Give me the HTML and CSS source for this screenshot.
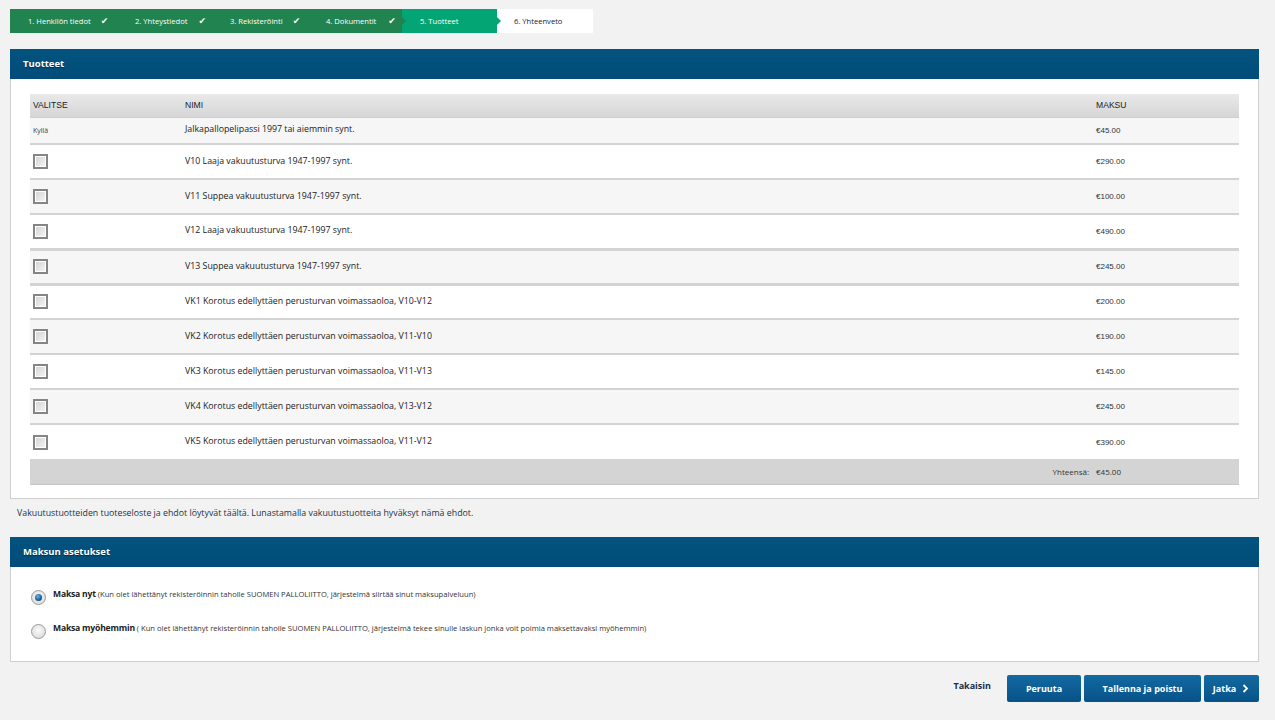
FILE: index.html
```html
<!DOCTYPE html>
<html lang="fi">
<head>
<meta charset="utf-8">
<title>Tuotteet</title>
<link rel="stylesheet" href="styles.css">
</head>
<body>
<div class="page">
  <nav class="steps">
    <div class="step done s1"><span>1. Henkilön tiedot</span><span class="chk">✔</span></div>
    <div class="step done s2"><span>2. Yhteystiedot</span><span class="chk">✔</span></div>
    <div class="step done s3"><span>3. Rekisteröinti</span><span class="chk">✔</span></div>
    <div class="step done s4 arrow"><span>4. Dokumentit</span><span class="chk">✔</span></div>
    <div class="step current s5 arrow"><span>5. Tuotteet</span></div>
    <div class="step todo s6"><span>6. Yhteenveto</span></div>
  </nav>

  <section class="panel">
    <h2 class="panel-head">Tuotteet</h2>
    <div class="panel-body products">
      <table class="ptable">
        <thead>
          <tr><th class="c1">VALITSE</th><th class="c2">NIMI</th><th class="c3">MAKSU</th></tr>
        </thead>
        <tbody>
          <tr class="alt first"><td class="c1 yes">Kyllä</td><td class="c2">Jalkapallopelipassi 1997 tai aiemmin synt.</td><td class="c3">€45.00</td></tr>
          <tr><td class="c1"><span class="cb"></span></td><td class="c2">V10 Laaja vakuutusturva 1947-1997 synt.</td><td class="c3">€290.00</td></tr>
          <tr class="alt"><td class="c1"><span class="cb"></span></td><td class="c2">V11 Suppea vakuutusturva 1947-1997 synt.</td><td class="c3">€100.00</td></tr>
          <tr class="thick"><td class="c1"><span class="cb"></span></td><td class="c2">V12 Laaja vakuutusturva 1947-1997 synt.</td><td class="c3">€490.00</td></tr>
          <tr class="alt thick"><td class="c1"><span class="cb"></span></td><td class="c2">V13 Suppea vakuutusturva 1947-1997 synt.</td><td class="c3">€245.00</td></tr>
          <tr><td class="c1"><span class="cb"></span></td><td class="c2">VK1 Korotus edellyttäen perusturvan voimassaoloa, V10-V12</td><td class="c3">€200.00</td></tr>
          <tr class="alt"><td class="c1"><span class="cb"></span></td><td class="c2">VK2 Korotus edellyttäen perusturvan voimassaoloa, V11-V10</td><td class="c3">€190.00</td></tr>
          <tr><td class="c1"><span class="cb"></span></td><td class="c2">VK3 Korotus edellyttäen perusturvan voimassaoloa, V11-V13</td><td class="c3">€145.00</td></tr>
          <tr class="alt"><td class="c1"><span class="cb"></span></td><td class="c2">VK4 Korotus edellyttäen perusturvan voimassaoloa, V13-V12</td><td class="c3">€245.00</td></tr>
          <tr><td class="c1"><span class="cb"></span></td><td class="c2">VK5 Korotus edellyttäen perusturvan voimassaoloa, V11-V12</td><td class="c3">€390.00</td></tr>
        </tbody>
        <tfoot>
          <tr><td colspan="2" class="sum-label">Yhteensä:</td><td class="c3 sum">€45.00</td></tr>
        </tfoot>
      </table>
    </div>
  </section>

  <p class="note">Vakuutustuotteiden tuoteseloste ja ehdot löytyvät täältä. Lunastamalla vakuutustuotteita hyväksyt nämä ehdot.</p>

  <section class="panel">
    <h2 class="panel-head">Maksun asetukset</h2>
    <div class="panel-body payment">
      <label class="opt"><span class="radio on"></span><b>Maksa nyt</b><span class="desc">(Kun olet lähettänyt rekisteröinnin taholle SUOMEN PALLOLIITTO, järjestelmä siirtää sinut maksupalveluun)</span></label>
      <label class="opt"><span class="radio"></span><b>Maksa myöhemmin</b><span class="desc">( Kun olet lähettänyt rekisteröinnin taholle SUOMEN PALLOLIITTO, järjestelmä tekee sinulle laskun jonka voit poimia maksettavaksi myöhemmin)</span></label>
    </div>
  </section>

  <div class="actions">
    <a class="back">Takaisin</a>
    <button class="btn b1">Peruuta</button>
    <button class="btn b2">Tallenna ja poistu</button>
    <button class="btn b3">Jatka <svg class="chev" width="7" height="9" viewBox="0 0 7 9"><path d="M1.5 1 L5 4.5 L1.5 8" fill="none" stroke="#fff" stroke-width="1.8"/></svg></button>
  </div>
</div>
</body>
</html>
```

FILE: styles.css
```css
* { box-sizing: border-box; }
html, body { margin: 0; padding: 0; }
body {
  background: #f2f2f2;
  font-family: "Open Sans", "DejaVu Sans", sans-serif;
  color: #222;
  width: 1275px;
  height: 720px;
  overflow: hidden;
}
.page { padding: 9px 16px 0 10px; }

/* stepper */
.steps {
  display: grid;
  grid-template-columns: 108px 94px 98px 92px 95px 96px;
  width: 583px;
  height: 24px;
}
.step {
  position: relative;
  display: flex;
  align-items: center;
  padding-left: 18px;
  font-size: 7.6px;
  color: #fff;
  white-space: nowrap;
}
.step.done { background: #21834f; }
.step.current { background: #03a574; }
.step.todo { background: #fff; color: #222; padding-left: 17px; }
.s2 { padding-left: 17px; }
.s4 { padding-left: 16px; }
.chk { margin-left: 10px; font-size: 9px; font-family: "DejaVu Sans", sans-serif; }
.s2 .chk { margin-left: 11px; }
.s4 .chk { margin-left: 12px; }
.step.arrow::after {
  content: "";
  position: absolute;
  right: -4px;
  top: 8px;
  border-top: 4px solid transparent;
  border-bottom: 4px solid transparent;
  border-left: 4px solid #21834f;
  z-index: 2;
}
.step.current.arrow::after { border-left-color: #03a574; }

/* panels */
.panel { margin-top: 16px; }
.panel-head {
  margin: 0;
  height: 30px;
  line-height: 30px;
  padding-left: 13px;
  background: linear-gradient(#03537f, #014c7a);
  color: #fff;
  font-size: 9.5px;
  font-weight: 700;
  text-shadow: 0 1px 1px rgba(0,0,0,.45);
}
.panel-body {
  background: #fff;
  border: 1px solid #cfcfcf;
  border-top: none;
}
.products { padding: 15px 19px 13px 19px; }

.ptable {
  width: 100%;
  border-collapse: collapse;
  font-size: 8.8px;
}
.ptable th {
  height: 23px;
  text-align: left;
  font-family: "Liberation Sans", Arial, sans-serif;
  font-weight: 400;
  font-size: 8.6px;
  color: #222;
  background: linear-gradient(#e9e9e9, #d6d6d6);
  border-bottom: 1px solid #cfcfcf;
  padding: 0 3px;
}
.ptable .c1 { width: 152px; padding-left: 3px; }
.ptable .c3 { width: 146px; padding-left: 3px; }
.ptable td {
  height: 35px;
  border-bottom: 2px solid #d3d3d3;
  padding: 0 3px;
  vertical-align: middle;
}
.ptable td.c2 { padding-bottom: 2px; color: #222; }
.ptable td.c3 {
  font-family: "Liberation Sans", Arial, sans-serif;
  font-size: 8px;
  color: #333;
}
.ptable tbody tr { background: #fff; }
.ptable tbody tr.alt { background: #f6f6f6; }
.ptable tbody tr.first td { height: 27px; }
.ptable tbody tr.thick td { border-bottom-width: 3px; }
.ptable tbody tr:last-child td { border-bottom: none; }
.yes { font-size: 7px; color: #444; }
.cb {
  display: block;
  width: 15px;
  height: 15px;
  border: 2px solid #858585;
  background: linear-gradient(135deg, #d2d2d6, #f7f7f7);
  box-shadow: inset 0 0 0 1px #fff;
}
.ptable tfoot td {
  height: 25px;
  background: #d4d4d4;
  border-bottom: 1px solid #c6c6c6;
  font-size: 8px;
  color: #333;
}
.ptable tfoot .sum-label { text-align: right; padding-right: 4px; }
.ptable tfoot .sum { font-family: "Open Sans", sans-serif; font-size: 8px; }

.note {
  margin: 8px 0 0 7px;
  font-size: 8.8px;
  color: #1f3246;
  line-height: 13px;
}

.panel + .note + .panel { margin-top: 17px; }

.payment {
  padding: 23px 20px 22px 20px;
  display: flex;
  flex-direction: column;
  gap: 19px;
}
.opt {
  display: flex;
  align-items: center;
  font-size: 7.6px;
  color: #333;
  height: 15px;
}
.opt b {
  font-size: 8.6px;
  font-weight: 700;
  color: #222;
  margin-right: 2px;
  letter-spacing: -0.2px;
  position: relative;
  top: -3px;
}
.opt .desc { position: relative; top: -3px; }
.radio {
  width: 15px;
  height: 15px;
  border-radius: 50%;
  border: 1px solid #9a9a9a;
  background: radial-gradient(circle at 50% 40%, #fafafa, #d5d5d5);
  margin-right: 7px;
  flex: none;
  position: relative;
}
.radio.on::after {
  content: "";
  position: absolute;
  left: 3px; top: 3px;
  width: 7px; height: 7px;
  border-radius: 50%;
  background: radial-gradient(circle at 40% 35%, #6fb3e6, #0d4f86 70%, #0a3a63);
}

/* actions */
.actions {
  display: flex;
  justify-content: flex-end;
  align-items: center;
  gap: 3px;
  margin-top: 13px;
}
.back {
  font-size: 9px;
  font-weight: 700;
  color: #1a2e48;
  margin-right: 13px;
  position: relative;
  top: -3px;
}
.btn {
  height: 27px;
  border: none;
  border-radius: 2px;
  background: linear-gradient(#136aa1, #075288);
  color: #fff;
  font-family: "Open Sans", sans-serif;
  font-weight: 700;
  font-size: 9px;
  padding: 0;
}
.b1 { width: 74px; }
.b2 { width: 117px; }
.b3 { width: 55px; display: flex; align-items: center; justify-content: center; gap: 6px; padding-right: 1px; }
.chev { display: block; }
```
